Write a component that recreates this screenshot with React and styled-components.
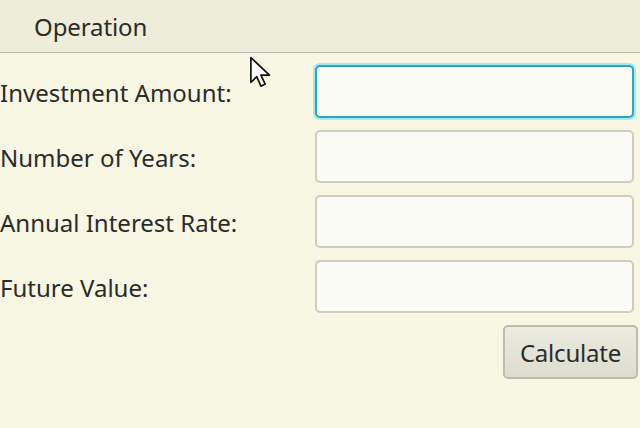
import React from 'react'
import styled, { createGlobalStyle } from 'styled-components'

const GlobalStyle = createGlobalStyle`
  html, body {
    margin: 0;
    padding: 0;
    background: #f8f7e3;
    font-family: 'Noto Sans', 'Open Sans', sans-serif;
    color: #2b2b2b;
  }
`

const Page = styled.div`
  position: relative;
  width: 640px;
  height: 428px;
  overflow: hidden;
  background: #f8f7e3;
`

const MenuBar = styled.div`
  height: 52px;
  display: flex;
  align-items: center;
  padding-left: 34px;
  background: #eeedd9;
  border-bottom: 1px solid #b9b8b0;
`

const MenuItem = styled.span`
  font-size: 24px;
  letter-spacing: -0.1px;
`

const Form = styled.div`
  display: grid;
  grid-template-columns: 315px 319px;
  grid-auto-rows: 53px;
  row-gap: 12px;
  padding-top: 12px;
`

const Label = styled.label`
  display: flex;
  align-items: center;
  font-size: 24px;
  padding-top: 2px;
`

const Input = styled.input`
  box-sizing: border-box;
  width: 100%;
  height: 53px;
  margin: 0;
  border-radius: 5px;
  background: #fcfcf7;
  outline: none;
  font-size: 20px;
  border: ${p => (p.focused ? '2px solid #2aa7bd' : '2px solid #cfcdc4')};
  box-shadow: ${p => (p.focused ? '0 0 0 2px #a8e6f2' : 'none')};
`

const ButtonRow = styled.div`
  display: flex;
  justify-content: flex-end;
  padding: 12px 2px 0 0;
`

const Button = styled.button`
  box-sizing: border-box;
  width: 135px;
  height: 54px;
  border-radius: 5px;
  border: 2px solid #bdbbb2;
  background: linear-gradient(#ecebe0, #dddcd0);
  font-family: inherit;
  font-size: 24px;
  letter-spacing: -0.2px;
  color: #2b2b2b;
  padding: 0;
`

const Cursor = styled.svg`
  position: absolute;
  left: 249px;
  top: 56px;
`

const fields = ['Investment Amount:', 'Number of Years:', 'Annual Interest Rate:', 'Future Value:']

const App = () => (
  <Page>
    <GlobalStyle />
    <MenuBar>
      <MenuItem>Operation</MenuItem>
    </MenuBar>
    <Form>
      {fields.map((f, i) => (
        <React.Fragment key={f}>
          <Label>{f}</Label>
          <Input focused={i === 0 ? 1 : 0} />
        </React.Fragment>
      ))}
    </Form>
    <ButtonRow>
      <Button>Calculate</Button>
    </ButtonRow>
    <Cursor width="26" height="36" viewBox="0 0 24 34">
      <path d="M1.5 1.5 L1.5 25 L7 19.5 L11 28.5 L15 26.5 L11 18 L19 18 Z" fill="#fff" stroke="#111" strokeWidth="1.6" strokeLinejoin="round" />
    </Cursor>
  </Page>
)

export default App
